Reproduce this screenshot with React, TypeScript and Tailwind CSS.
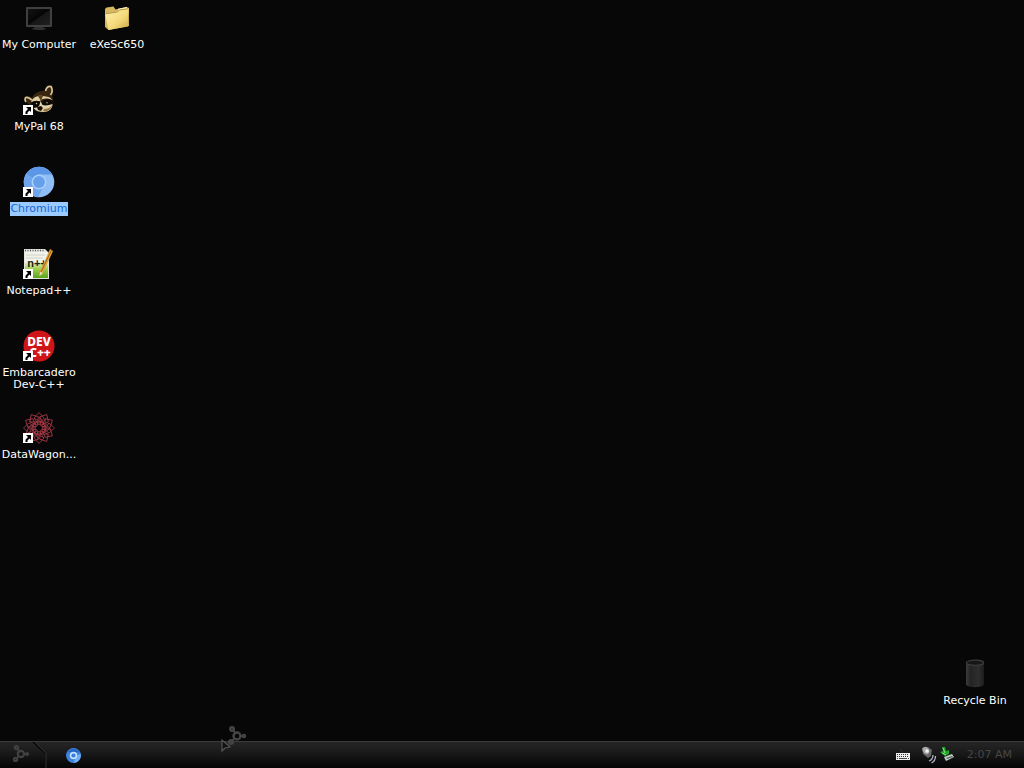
import type { ReactNode } from "react";

function ShortcutArrow() {
  return (
    <g>
      <rect x="0" y="21" width="10" height="10" fill="#fff" />
      <path d="M3 23h5v5L6.500 26.500 4.500 28.500V30H2.500v-2.200L5 25z" fill="#000" />
    </g>
  );
}

function ComputerIcon() {
  return (
    <svg viewBox="0 0 32 32" className="size-8" aria-hidden="true">
      <defs>
        <linearGradient id="screen" x1="0" y1="0" x2="1" y2="1">
          <stop offset="0" stopColor="#141414" />
          <stop offset="0.5" stopColor="#050505" />
          <stop offset="0.52" stopColor="#161616" />
          <stop offset="1" stopColor="#202020" />
        </linearGradient>
      </defs>
      <rect x="3" y="5" width="26" height="20" rx="1" fill="#404040" />
      <rect x="5" y="7" width="22" height="16" fill="url(#screen)" />
      <path d="M12 25h8l1 1h1.500v1.500L18 28h-4l-4.500-.5V26H11z" fill="#303030" />
    </svg>
  );
}

function FolderIcon() {
  return (
    <svg viewBox="0 0 32 32" className="size-8" aria-hidden="true">
      <defs>
        <linearGradient id="folder" x1="0" y1="0" x2="1" y2="1">
          <stop offset="0" stopColor="#fff3b0" />
          <stop offset="0.6" stopColor="#f3d878" />
          <stop offset="1" stopColor="#c9a646" />
        </linearGradient>
      </defs>
      <path d="M4 7l1.500-1.500 7-1 2 3L25.500 5l2 1L28 24 7.500 28 4 25z" fill="#d8b85c" />
      <path d="M17 6.800L26 5l.5 3-9 1.500z" fill="#fff6c8" />
      <path d="M4 11.500L16 9.500l2-2.200 10-1.500-1 18.700L7.500 28z" fill="url(#folder)" />
      <path d="M4.500 11.800l12-1.800 2-2 9-1.300" fill="none" stroke="#a08032" strokeWidth="0.8" />
    </svg>
  );
}

function RaccoonIcon() {
  return (
    <svg viewBox="0 0 32 32" className="size-8" aria-hidden="true">
      <path d="M2 13c2-2 5-1 7 1 2-5 8-8 14-7 1-4 4-6 6-5 2 4 1 8 0 10 3 5 1 12-4 15-6 3-11 1-14-3l-7-5z" fill="#38260f" />
      <path d="M3 18c-2-3-1-6 3-4l3 2M22.500 7c1-4 3-5 5.500-4.500C30 6 29 9 27.500 11" fill="none" stroke="#d9c396" strokeWidth="1.700" />
      <path d="M8 18c2-5 7-7 12-6 4 .5 8 1 9 4-5-2-9-2-12 1-3 1-5 0-9 1z" fill="#e0cda2" />
      <path d="M15 12l3 5 2-5z" fill="#5b421f" />
      <path d="M8 19c4-3 7-3 10 0 2-4 7-5 12-2 0 4-3 7-8 5-4-1-9 3-13 1z" fill="#0d0906" />
      <path d="M17.500 17l2 4c3 1 7 0 10-1 0 5-4 8-9 8-4 0-8-1-10-4 3 0 5-1 6-3z" fill="#e2d2ab" />
      <path d="M21 25c3 0 6-1 8-4-1 5-5 7-9 6z" fill="#95743f" />
      <path d="M14 23l4-1 2 2-2 3-3-1z" fill="#171009" />
      <circle cx="13.500" cy="19.500" r="0.700" fill="#d9c396" />
      <circle cx="24" cy="18.800" r="0.700" fill="#d9c396" />
      <ShortcutArrow />
    </svg>
  );
}

function ChromiumIcon() {
  return (
    <svg viewBox="0 0 32 32" className="size-8" aria-hidden="true">
      <circle cx="16" cy="16" r="15.300" fill="#8fbdf5" />
      <path d="M16 16L3 8A15.300 15.300 0 0 1 29.200 8.500H16z" fill="#5b97e6" />
      <path d="M3 8a15.300 15.300 0 0 0 12 23.200l6-11.700z" fill="#6fa5ec" />
      <circle cx="16" cy="16" r="7.500" fill="#a9cffb" />
      <circle cx="16" cy="16" r="5.900" fill="#669fea" />
      <ShortcutArrow />
    </svg>
  );
}

function NotepadIcon() {
  return (
    <svg viewBox="0 0 32 32" className="size-8" aria-hidden="true">
      <defs>
        <linearGradient id="page" x1="0" y1="0" x2="0" y2="1">
          <stop offset="0.350" stopColor="#f3f3ec" />
          <stop offset="0.650" stopColor="#9fce4e" />
          <stop offset="1" stopColor="#58a51d" />
        </linearGradient>
      </defs>
      <path d="M1 1h21l4 4v26H1z" fill="#e5e5df" />
      <path d="M2 4h23v26H2z" fill="url(#page)" />
      <path d="M2 2.500h20" stroke="#555" strokeWidth="1.500" strokeDasharray="1 1.500" />
      <path d="M3 7h19M3 10h17" stroke="#c5c9c0" strokeWidth="0.8" />
      <text x="14" y="19" fill="#192413" fontFamily="'Liberation Sans', sans-serif" fontSize="11" fontWeight="700" textAnchor="middle">n++</text>
      <path d="M27 1l3 2-10 22-3.500 3 .4-4.500z" fill="#e2a33c" />
      <path d="M28.500 2L18 24" stroke="#8f5718" strokeWidth="0.800" />
      <path d="M17 24l3 1-3.500 3z" fill="#eee0bb" />
      <ShortcutArrow />
    </svg>
  );
}

function DevIcon() {
  return (
    <svg viewBox="0 0 32 32" className="size-8" aria-hidden="true">
      <circle cx="16" cy="16" r="15.500" fill="#cf1519" />
      <text fill="#fff" fontFamily="'Noto Sans', sans-serif" fontSize="12" fontWeight="800" textAnchor="middle">
        <tspan x="16" y="16">DEV</tspan>
        <tspan x="17" y="27">C++</tspan>
      </text>
      <ShortcutArrow />
    </svg>
  );
}

const petals = [0, 30, 60, 90, 120, 150, 180, 210, 240, 270, 300, 330];

function DataWagonIcon() {
  return (
    <svg viewBox="0 0 32 32" className="size-8" aria-hidden="true">
      <g fill="none" stroke="#a83a48" strokeWidth="0.8">
        {petals.map((angle) => (
          <path key={angle} transform={`rotate(${angle} 16 16)`} d="M16 13L11 6l5-5.500L21 6zM11 6l10 6" />
        ))}
      </g>
      <ShortcutArrow />
    </svg>
  );
}

function BinIcon() {
  return (
    <svg viewBox="0 0 32 32" className="size-8" aria-hidden="true">
      <defs>
        <linearGradient id="bin">
          <stop offset="0" stopColor="#3c3c3c" />
          <stop offset="0.250" stopColor="#242424" />
          <stop offset="0.700" stopColor="#2e2e2e" />
          <stop offset="1" stopColor="#1c1c1c" />
        </linearGradient>
      </defs>
      <path d="M7 4.500v22c1 3.500 17 3.500 18 0v-22z" fill="url(#bin)" />
      <ellipse cx="16" cy="4.800" rx="8.700" ry="2.600" fill="#161616" stroke="#3c3c3c" strokeWidth="1.200" />
    </svg>
  );
}

function HubShape() {
  return (
    <g fill="none" stroke="currentColor">
      <path d="M7 4l3 4M8 13l-3 3M14 10h4" strokeWidth="2" />
      <circle cx="11" cy="10" r="3.500" strokeWidth="2.400" />
      <circle cx="6" cy="3" r="1.800" strokeWidth="2.400" />
      <circle cx="5" cy="16" r="1.800" strokeWidth="2.400" />
      <circle cx="18" cy="10" r="1.200" strokeWidth="2" />
    </g>
  );
}

type ItemProps = { label: string; icon: ReactNode; selected?: boolean };

function DesktopItem({ label, icon, selected = false }: ItemProps) {
  return (
    <button type="button" className="flex h-[82px] w-[78px] flex-col items-center gap-1 pt-0.5 text-[11px] leading-3">
      {icon}
      <span className={selected ? "bg-[#9bcaff] py-px text-[#1767cf]" : "py-px text-white"}>{label}</span>
    </button>
  );
}

const shortcuts: ItemProps[] = [
  { label: "My Computer", icon: <ComputerIcon /> },
  { label: "MyPal 68", icon: <RaccoonIcon /> },
  { label: "Chromium", icon: <ChromiumIcon />, selected: true },
  { label: "Notepad++", icon: <NotepadIcon /> },
  { label: "Embarcadero Dev-C++", icon: <DevIcon /> },
  { label: "DataWagon...", icon: <DataWagonIcon /> },
];

function Taskbar() {
  return (
    <footer className="flex h-[27px] items-stretch border-t border-[#3a3a3a] bg-linear-to-b from-[#262626] via-[#171717] to-[#050505]">
      <button type="button" aria-label="Start" className="w-12 text-[#414141]">
        <svg viewBox="0 0 48 26" className="h-full w-full" aria-hidden="true">
          <path d="M32 0h3l11 11v15h-1V12z" fill="#090909" />
          <path d="M35 0l11 11v15" fill="none" stroke="#3b3b3b" strokeWidth="0.8" />
          <g transform="translate(11 3) scale(.9)"><HubShape /></g>
        </svg>
      </button>
      <button type="button" aria-label="Chromium" className="flex w-[50px] items-center justify-center">
        <svg viewBox="0 0 32 32" className="size-[15px]" aria-hidden="true">
          <circle cx="16" cy="16" r="16" fill="#3d82dc" />
          <path d="M3 9A16 16 0 0 1 29 9H16z" fill="#2567c4" />
          <path d="M16 32A16 16 0 0 0 31 12l-9 5z" fill="#70aef5" />
          <circle cx="16" cy="16" r="8" fill="#c3e0ff" />
          <circle cx="16" cy="16" r="4.500" fill="#397ed8" />
        </svg>
      </button>
      <div className="ml-auto flex items-center pr-3">
        <button type="button" aria-label="Keyboard" className="mr-2.5">
          <svg viewBox="0 0 16 16" className="size-4" aria-hidden="true">
            <path d="M5 2l2 2v2" fill="none" stroke="#333" />
            <rect x="1" y="6" width="14" height="7" fill="#eee" />
            <path d="M2 7.500h12M2 9.500h12" stroke="#333" strokeDasharray="1 1" />
            <path d="M2 11.500h1M4 11.500h8M13 11.500h1" stroke="#444" />
          </svg>
        </button>
        <button type="button" aria-label="Volume">
          <svg viewBox="0 0 18 18" className="size-[18px]" aria-hidden="true">
            <path d="M1 2l6-1 4 3-1 6-3 2-5-4z" fill="#666" />
            <ellipse cx="5" cy="4.500" rx="3" ry="4" transform="rotate(-35 5 4.500)" fill="#aaa" />
            <circle cx="6" cy="5" r="1.800" fill="#eee" />
            <path d="M12 9c0 3-1 5-4 6M14.500 10c0 3-2 6-4 7" fill="none" stroke="#b0b3c4" strokeWidth="1.300" />
          </svg>
        </button>
        <button type="button" aria-label="Safely remove hardware" className="mr-2.5">
          <svg viewBox="0 0 18 18" className="size-[18px]" aria-hidden="true">
            <path d="M5 11l8-3 2 3-8 4z" fill="#c2cdc7" />
            <path d="M7 12l6-2 1 1-6 2z" fill="#53665b" />
            <path d="M3 1h3l1 4 3-1v4l-4 2-5-4 3-1z" fill="#20a72b" />
            <path d="M4 2l2 5M3 7l4 2" fill="none" stroke="#83e474" />
          </svg>
        </button>
        <time className="text-[11px] leading-4 text-[#474747]">2:07 AM</time>
      </div>
    </footer>
  );
}

export default function App() {
  return (
    <div className="relative flex min-h-screen flex-col bg-[#070707] font-['DejaVu_Sans',sans-serif]">
      <main className="flex flex-1 items-start justify-between">
        <div className="flex">
          <div className="flex flex-col">
            {shortcuts.map((item) => (
              <DesktopItem key={item.label} {...item} />
            ))}
          </div>
          <DesktopItem label="eXeSc650" icon={<FolderIcon />} />
        </div>
        <div className="self-end pr-2.5 pb-[3px]">
          <DesktopItem label="Recycle Bin" icon={<BinIcon />} />
        </div>
      </main>
      <Taskbar />
      <svg viewBox="0 0 28 28" className="pointer-events-none absolute bottom-[15px] left-[220px] size-7 text-[#454545]" aria-hidden="true">
        <g transform="translate(6 1)"><HubShape /></g>
        <path d="M2 15v11l3-3 5-1z" fill="#111" stroke="#555" strokeWidth="1.200" />
      </svg>
    </div>
  );
}
